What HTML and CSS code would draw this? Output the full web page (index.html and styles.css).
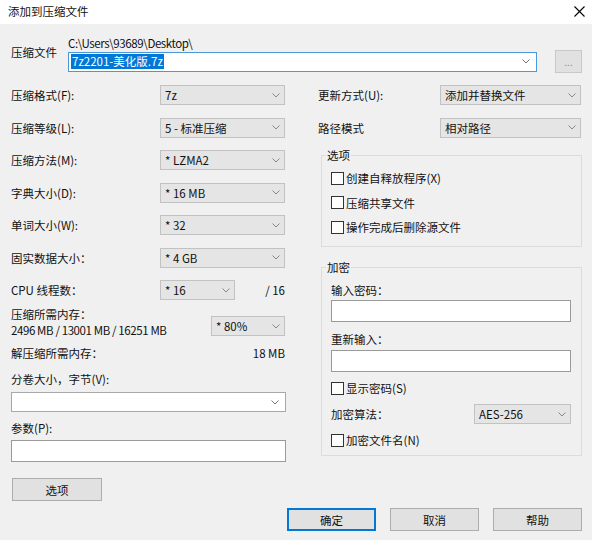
FILE: index.html
```html
<!DOCTYPE html>
<html lang="zh-CN">
<head>
    <meta charset="UTF-8">
    <title>添加到压缩文件</title>
    <link rel="stylesheet" href="styles.css">
</head>
<body>
    <div class="window">
        <div class="titlebar">
            <span>添加到压缩文件</span>
            <svg class="close" width="11" height="11" viewBox="0 0 11 11">
                <path d="M0.5 0.5 L10.5 10.5 M10.5 0.5 L0.5 10.5" stroke="#000" stroke-width="1.1" fill="none"/>
            </svg>
        </div>

        <div class="content">
            <!-- archive name -->
            <div class="archive">
                <div class="archive-label">压缩文件</div>
                <div>
                    <div class="path latin">C:\Users\93689\Desktop\</div>
                    <div class="archive-row">
                        <div class="combo focus">
                            <span class="picked">7z2201-美化版.7z</span>
                            <svg class="chev" width="8" height="5" viewBox="0 0 8 5"><path d="M0.5 0.5 L4 4 L7.5 0.5" stroke="#777" fill="none"/></svg>
                        </div>
                        <button class="btn browse">...</button>
                    </div>
                </div>
            </div>

            <div class="columns">
                <!-- left column -->
                <div class="left">
                    <div class="fields">
                        <span>压缩格式(F):</span>
                        <div class="select">7z<svg class="chev" width="8" height="5" viewBox="0 0 8 5"><path d="M0.5 0.5 L4 4 L7.5 0.5" stroke="#888" fill="none"/></svg></div>
                        <span>压缩等级(L):</span>
                        <div class="select">5 - 标准压缩<svg class="chev" width="8" height="5" viewBox="0 0 8 5"><path d="M0.5 0.5 L4 4 L7.5 0.5" stroke="#888" fill="none"/></svg></div>
                        <span>压缩方法(M):</span>
                        <div class="select">* LZMA2<svg class="chev" width="8" height="5" viewBox="0 0 8 5"><path d="M0.5 0.5 L4 4 L7.5 0.5" stroke="#888" fill="none"/></svg></div>
                        <span>字典大小(D):</span>
                        <div class="select">* 16 MB<svg class="chev" width="8" height="5" viewBox="0 0 8 5"><path d="M0.5 0.5 L4 4 L7.5 0.5" stroke="#888" fill="none"/></svg></div>
                        <span>单词大小(W):</span>
                        <div class="select">* 32<svg class="chev" width="8" height="5" viewBox="0 0 8 5"><path d="M0.5 0.5 L4 4 L7.5 0.5" stroke="#888" fill="none"/></svg></div>
                        <span>固实数据大小：</span>
                        <div class="select">* 4 GB<svg class="chev" width="8" height="5" viewBox="0 0 8 5"><path d="M0.5 0.5 L4 4 L7.5 0.5" stroke="#888" fill="none"/></svg></div>
                        <span>CPU 线程数：</span>
                        <div class="cpu">
                            <div class="select short">* 16<svg class="chev" width="8" height="5" viewBox="0 0 8 5"><path d="M0.5 0.5 L4 4 L7.5 0.5" stroke="#888" fill="none"/></svg></div>
                            <span>/ 16</span>
                        </div>
                    </div>

                    <div class="memory">
                        <div>压缩所需内存：<br><span class="latin">2496 MB / 13001 MB / 16251 MB</span></div>
                        <div class="select mem">* 80%<svg class="chev" width="8" height="5" viewBox="0 0 8 5"><path d="M0.5 0.5 L4 4 L7.5 0.5" stroke="#888" fill="none"/></svg></div>
                    </div>
                    <div class="unpack">
                        <span>解压缩所需内存：</span>
                        <span>18 MB</span>
                    </div>

                    <div class="label volume-label">分卷大小，字节(V):</div>
                    <div class="combo volume">
                        <span></span>
                        <svg class="chev" width="8" height="5" viewBox="0 0 8 5"><path d="M0.5 0.5 L4 4 L7.5 0.5" stroke="#777" fill="none"/></svg>
                    </div>
                    <div class="label param-label">参数(P):</div>
                    <input class="edit param" type="text">

                    <button class="btn options">选项</button>
                </div>

                <!-- right column -->
                <div class="right">
                    <div class="fields right-fields">
                        <span>更新方式(U):</span>
                        <div class="select">添加并替换文件<svg class="chev" width="8" height="5" viewBox="0 0 8 5"><path d="M0.5 0.5 L4 4 L7.5 0.5" stroke="#888" fill="none"/></svg></div>
                        <span>路径模式</span>
                        <div class="select">相对路径<svg class="chev" width="8" height="5" viewBox="0 0 8 5"><path d="M0.5 0.5 L4 4 L7.5 0.5" stroke="#888" fill="none"/></svg></div>
                    </div>

                    <fieldset class="group opts">
                        <legend>选项</legend>
                        <div class="checks">
                            <label class="check"><span class="box"></span>创建自释放程序(X)</label>
                            <label class="check"><span class="box"></span>压缩共享文件</label>
                            <label class="check"><span class="box"></span>操作完成后删除源文件</label>
                        </div>
                    </fieldset>

                    <fieldset class="group crypt">
                        <legend>加密</legend>
                        <div class="label pw-label">输入密码：</div>
                        <input class="edit pw" type="text">
                        <div class="label pw2-label">重新输入：</div>
                        <input class="edit pw2" type="text">
                        <label class="check show-pw"><span class="box"></span>显示密码(S)</label>
                        <div class="algo">
                            <span>加密算法：</span>
                            <div class="select algo-select">AES-256<svg class="chev" width="8" height="5" viewBox="0 0 8 5"><path d="M0.5 0.5 L4 4 L7.5 0.5" stroke="#888" fill="none"/></svg></div>
                        </div>
                        <label class="check enc-names"><span class="box"></span>加密文件名(N)</label>
                    </fieldset>
                </div>
            </div>

            <div class="footer">
                <button class="btn default">确定</button>
                <button class="btn">取消</button>
                <button class="btn">帮助</button>
            </div>
        </div>
    </div>
</body>
</html>
```

FILE: styles.css
```css
* {
    box-sizing: border-box;
}

body {
    margin: 0;
    background: #f0f0f0;
    font-family: "Noto Sans CJK SC", "Noto Sans", sans-serif;
    font-size: 11.5px;
    line-height: 16px;
    color: #111;
}

.window {
    width: 592px;
    height: 540px;
    background: #f0f0f0;
    overflow: hidden;
}

.titlebar {
    height: 24px;
    background: #fff;
    display: flex;
    align-items: center;
    justify-content: space-between;
    padding: 0 7px 2px 8px;
}

.content {
    padding: 12px 10px 0 11px;
}

.latin {
    letter-spacing: -0.4px;
}

/* archive name row */
.archive {
    display: grid;
    grid-template-columns: 57px 1fr;
}

.archive-label {
    padding-top: 8px;
}

.path {
    height: 14px;
    line-height: 14px;
}

.archive-row {
    display: flex;
    align-items: center;
    gap: 18px;
    height: 23px;
}

/* controls */
.select,
.combo {
    height: 20px;
    display: flex;
    align-items: center;
    justify-content: space-between;
    padding: 0 4px 0 4px;
    white-space: nowrap;
}

.select {
    background: #e5e5e5;
    border: 1px solid #c2c2c2;
}

.combo {
    background: #fff;
    border: 1px solid #a8a8a8;
    padding: 0 6px 0 2px;
}

.combo.focus {
    width: 469px;
    border-color: #4a98d8;
}

.picked {
    background: #0078d7;
    color: #fff;
    line-height: 15px;
    padding: 0 1px;
}

.chev {
    flex: none;
}

.edit {
    display: block;
    height: 22px;
    border: 1px solid #9a9a9a;
    background: #fff;
    padding: 0 3px;
    font: inherit;
    outline: none;
}

.btn {
    background: #e1e1e1;
    border: 1px solid #adadad;
    font: inherit;
    color: #111;
    height: 23px;
    padding: 0;
    cursor: pointer;
}

.btn.browse {
    width: 27px;
    color: #888;
    font-size: 10px;
    border-color: #c8c8c8;
}

.btn.default {
    border-color: #0078d7;
    box-shadow: inset 0 0 0 1px #0078d7;
}

/* two columns */
.columns {
    display: grid;
    grid-template-columns: 274px 264px;
    column-gap: 33px;
    margin-top: 12px;
}

.fields {
    display: grid;
    grid-template-columns: 149px 125px;
    row-gap: 12.5px;
    align-items: center;
    white-space: nowrap;
}

.right-fields {
    grid-template-columns: 122px 141px;
}

.cpu {
    display: flex;
    align-items: center;
    justify-content: space-between;
}

.select.short {
    width: 75px;
}

.memory {
    display: flex;
    justify-content: space-between;
    align-items: flex-end;
    margin-top: 6px;
}

.select.mem {
    width: 74px;
    margin-bottom: 2px;
}

.unpack {
    display: flex;
    justify-content: space-between;
    margin-top: 7px;
}

.volume-label {
    margin-top: 10px;
}

.combo.volume {
    margin-top: 5px;
    width: 275px;
}

.param-label {
    margin-top: 8px;
}

.edit.param {
    margin-top: 4px;
    width: 275px;
}

.btn.options {
    margin-top: 16px;
    margin-left: 1px;
    width: 90px;
}

/* group boxes */
.group {
    margin: 9.5px 0 0 3px;
    padding: 0 10px 11px 9px;
    border: 1px solid #dcdcdc;
    min-width: 0;
}

.group legend {
    padding: 0 1px;
    margin-left: -5px;
    line-height: 16px;
}

.checks {
    display: flex;
    flex-direction: column;
    gap: 8.5px;
    padding-top: 7px;
}

.check {
    display: flex;
    align-items: center;
    gap: 2px;
    height: 16px;
    white-space: nowrap;
}

.box {
    width: 13px;
    height: 13px;
    border: 1px solid #333;
    background: #fff;
    flex: none;
}

.group.crypt {
    margin-top: 12px;
    padding-bottom: 7px;
}

.pw-label {
    padding-top: 7px;
}

.edit.pw,
.edit.pw2 {
    width: 240px;
}

.edit.pw {
    margin-top: 2px;
}

.pw2-label {
    margin-top: 9px;
}

.edit.pw2 {
    margin-top: 3px;
}

.show-pw {
    margin-top: 8px;
}

.algo {
    display: flex;
    align-items: center;
    justify-content: space-between;
    width: 240px;
    margin-top: 8px;
}

.algo-select {
    width: 97px;
}

.enc-names {
    margin-top: 8px;
}

/* bottom buttons */
.footer {
    display: flex;
    justify-content: flex-end;
    gap: 14px;
    margin-top: 7px;
}

.footer .btn {
    width: 89px;
}
```
